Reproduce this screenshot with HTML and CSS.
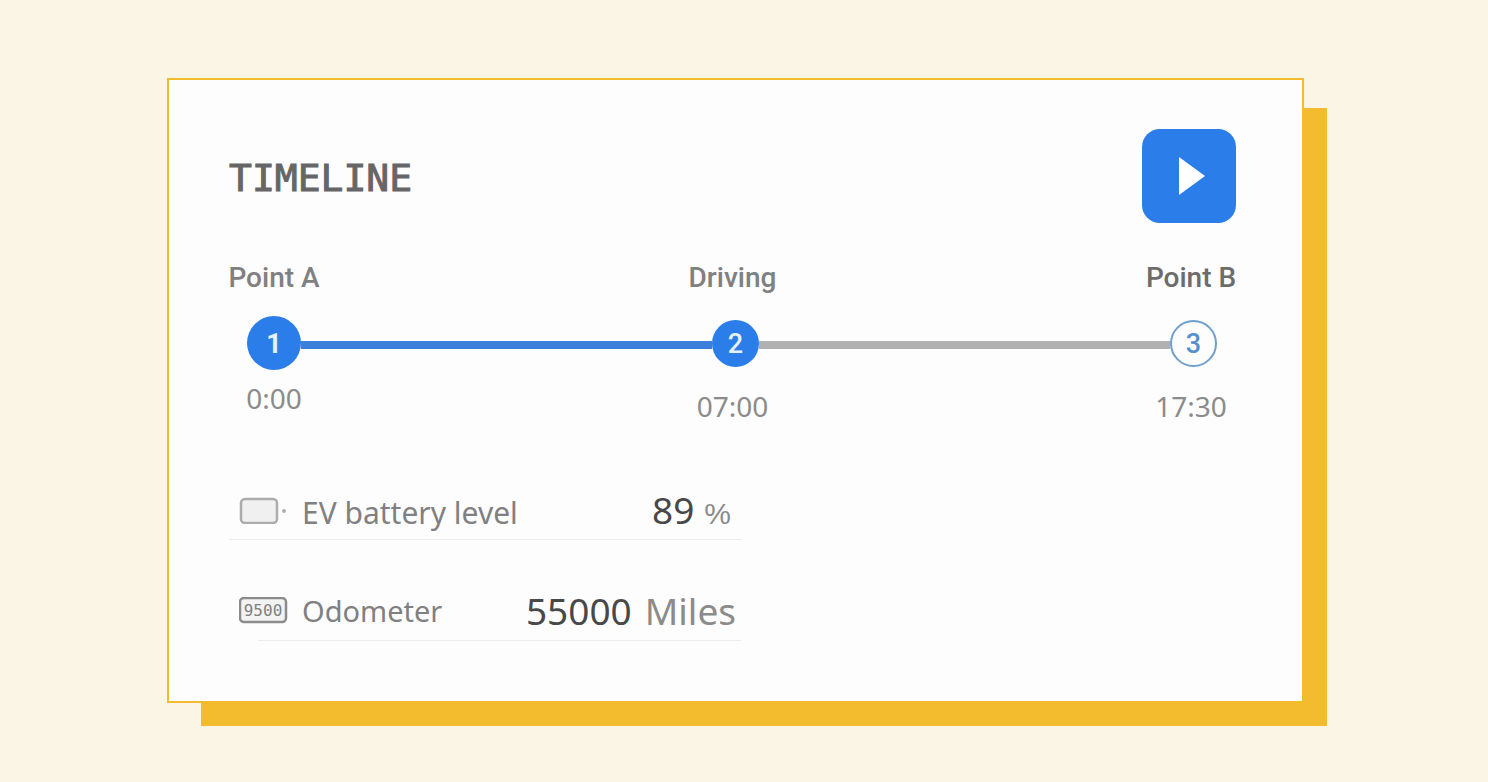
FILE: index.html
```html
<!DOCTYPE html>
<html lang="en">
<head>
    <meta charset="UTF-8">
    <meta name="viewport" content="width=device-width, initial-scale=1.0">
    <title>Timeline</title>
    <link rel="stylesheet" href="styles.css">
</head>
<body>
    <main class="card">
        <header class="card-header">
            <h1>TIMELINE</h1>
            <button class="play-btn" type="button" aria-label="Play">
                <svg width="28" height="40" viewBox="0 0 28 40" aria-hidden="true">
                    <path d="M1 1 L27 20 L1 39 Z" fill="#fff"/>
                </svg>
            </button>
        </header>

        <!-- Route progress -->
        <section class="timeline">
            <div class="labels">
                <span>Point A</span>
                <span>Driving</span>
                <span class="next">Point B</span>
            </div>
            <div class="track">
                <span class="step current">1</span>
                <span class="line done"></span>
                <span class="step">2</span>
                <span class="line"></span>
                <span class="step todo">3</span>
            </div>
            <div class="times">
                <time class="current-time">0:00</time>
                <time>07:00</time>
                <time>17:30</time>
            </div>
        </section>

        <!-- Vehicle readings -->
        <section class="metrics">
            <div class="metric">
                <svg class="metric-icon" width="50" height="28" viewBox="0 0 50 28" aria-hidden="true">
                    <rect x="2" y="3" width="36" height="24" rx="4" fill="#f0f0f0" stroke="#acacac" stroke-width="2.5"/>
                    <circle cx="45" cy="15" r="2" fill="#b0b0b0"/>
                </svg>
                <span class="metric-name">EV battery level</span>
                <span class="metric-value">89</span>
                <span class="metric-unit percent">%</span>
            </div>
            <div class="metric odometer">
                <svg class="metric-icon" width="50" height="28" viewBox="0 0 50 28" aria-hidden="true">
                    <rect x="1" y="1" width="46" height="24" rx="4" fill="#f3f3f3" stroke="#8c8c8c" stroke-width="2.5"/>
                    <text class="digits" x="24" y="19" text-anchor="middle">9500</text>
                </svg>
                <span class="metric-name">Odometer</span>
                <span class="metric-value">55000</span>
                <span class="metric-unit">Miles</span>
            </div>
        </section>
    </main>
</body>
</html>
```

FILE: styles.css
```css
* {
    box-sizing: border-box;
}

body {
    margin: 0;
    padding: 78px 184px 78px 167px;
    background-color: #fbf5e6;
    font-family: "Noto Sans", sans-serif;
    color: #808080;
}

.card {
    position: relative;
    padding: 49px 66px 60px 60px;
    border: 2px solid #f3bc2f;
    background-color: #fdfdfd;
}

/* offset block behind the card */
.card::before,
.card::after {
    content: "";
    position: absolute;
    background-color: #f3bc2f;
}

.card::before {
    top: 28px;
    bottom: -25px;
    left: 100%;
    width: 25px;
}

.card::after {
    top: 100%;
    left: 32px;
    right: -25px;
    height: 25px;
}

.card-header {
    display: flex;
    align-items: center;
    justify-content: space-between;
}

h1 {
    margin: 0;
    padding-top: 4px;
    font-family: "DejaVu Sans Mono", monospace;
    font-size: 38px;
    font-weight: normal;
    color: #666;
    -webkit-text-stroke: 1px #666;
}

.play-btn {
    display: flex;
    align-items: center;
    justify-content: center;
    width: 94px;
    height: 94px;
    padding: 0 0 0 6px;
    border: none;
    border-radius: 18px;
    background-color: #2b7de9;
    cursor: pointer;
}

.timeline {
    margin-top: 39px;
}

.labels,
.times {
    display: flex;
    justify-content: space-between;
}

.labels span,
.times time {
    display: flex;
    justify-content: center;
    width: 90px;
    white-space: nowrap;
    line-height: 32px;
}

.labels span {
    font-family: Roboto, sans-serif;
    font-size: 28px;
    font-weight: 500;
}

.labels .next {
    color: #6c6c6c;
}

.track {
    display: flex;
    align-items: center;
    margin-top: 22px;
    padding: 0 19px 0 18px;
}

.step {
    display: flex;
    align-items: center;
    justify-content: center;
    width: 47px;
    height: 47px;
    padding-top: 2px;
    border-radius: 50%;
    background-color: #2b7de9;
    color: #e6f1fd;
    font-family: Roboto, sans-serif;
    font-size: 27px;
    font-weight: 500;
}

.step.current {
    width: 54px;
    height: 54px;
    font-weight: bold;
}

.step.todo {
    border: 2px solid #6f9fcf;
    background-color: #fdfdfd;
    color: #5590cf;
}

.line {
    flex: 1;
    height: 8px;
    margin-top: 4px;
    background-color: #b1b1b1;
}

.line.done {
    background-color: #3a7fd9;
}

.times {
    margin-top: 12px;
    font-size: 28px;
    color: #8b8b8b;
}

.times time {
    padding-top: 8px;
}

.times .current-time {
    padding-top: 0;
}

.metrics {
    width: 512px;
    margin-top: 58px;
}

.metric {
    position: relative;
    display: flex;
    align-items: baseline;
    height: 60px;
    padding: 0 10px;
    line-height: 60px;
}

/* divider under the row */
.metric::after {
    content: "";
    position: absolute;
    right: 0;
    bottom: 0;
    left: 0;
    height: 1px;
    background-color: #ececec;
}

.metric-icon {
    align-self: center;
    margin-right: 13px;
}

.metric-name {
    flex: 1;
    font-size: 30px;
}

.metric-value {
    font-size: 37px;
    color: #484848;
}

.metric-unit {
    margin-left: 13px;
    font-size: 37px;
    color: #8b8b8b;
}

.metric-unit.percent {
    margin-left: 10px;
    font-family: "Liberation Sans", sans-serif;
    font-size: 30px;
}

.odometer {
    align-items: center;
    margin-top: 41px;
    padding-right: 5px;
}

.odometer::after {
    left: 29px;
}

.odometer .metric-name {
    font-size: 29px;
}

.digits {
    font-family: "DejaVu Sans Mono", monospace;
    font-size: 16px;
    fill: #808080;
}
```
